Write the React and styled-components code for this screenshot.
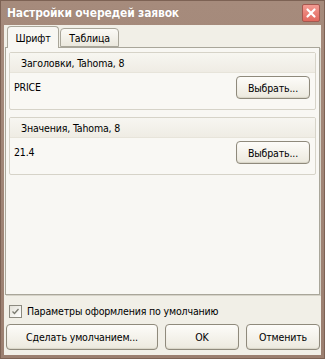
import React from "react";
import styled, { createGlobalStyle } from "styled-components";

const FONT = `"DejaVu Sans Condensed", "DejaVu Sans", Tahoma, sans-serif`;

const Global = createGlobalStyle`
  html, body { margin: 0; padding: 0; background: #fff; }
  body { font-family: ${FONT}; }
`;

const Window = styled.div`
  width: 325px;
  height: 359px;
  box-sizing: border-box;
  background: linear-gradient(#a68b7c, #9b7f70);
  border: 1px solid #7d6254;
  display: flex;
  flex-direction: column;
  padding: 0 3px 3px;
`;

const TitleBar = styled.div`
  height: 24px;
  flex: none;
  display: flex;
  align-items: center;
  justify-content: space-between;
  padding: 0 1px 0 3px;
`;

const Title = styled.div`
  color: #fff;
  font-weight: bold;
  font-size: 12px;
  letter-spacing: -0.2px;
  text-shadow: 0 0 1px rgba(0,0,0,0.2);
`;

const CloseButton = styled.div`
  width: 18px;
  height: 18px;
  box-sizing: border-box;
  border: 1px solid #a5584f;
  border-radius: 2px;
  background: linear-gradient(#f29b92, #e2685e);
  display: flex;
  align-items: center;
  justify-content: center;
`;

const Body = styled.div`
  flex: 1;
  background: #f1efe7;
  display: flex;
  flex-direction: column;
  padding: 1px 1px 5px 1px;
  font-size: 10.5px;
  letter-spacing: -0.15px;
  color: #000;
`;

const Tabs = styled.div`
  display: flex;
  align-items: flex-end;
  padding-left: 2px;
  height: 21px;
  position: relative;
  z-index: 1;
`;

const Tab = styled.div`
  box-sizing: border-box;
  height: ${p => (p.$active ? "22px" : "19px")};
  width: ${p => p.$w}px;
  justify-content: center;
  margin-bottom: ${p => (p.$active ? "-1px" : "0")};
  border: 1px solid #a9a69a;
  border-bottom: ${p => (p.$active ? "none" : "1px solid #a9a69a")};
  border-radius: 4px 4px 0 0;
  background: ${p => (p.$active ? "#f8f7f3" : "linear-gradient(#fbfaf6, #ebe8dd)")};
  display: flex;
  align-items: center;
  margin-right: 1px;
`;

const Panel = styled.div`
  flex: 1;
  background: #f8f7f3;
  border: 1px solid #a9a69a;
  box-shadow: 1px 1px 0 #d6d3c8;
  padding: 4px 3px;
  display: flex;
  flex-direction: column;
  gap: 7px;
`;

const Group = styled.div`
  border: 1px solid #d6d3c8;
  border-radius: 2px;
  background: #f9f8f4;
`;

const GroupHeader = styled.div`
  height: 19px;
  display: flex;
  align-items: center;
  padding-left: 11px;
  background: linear-gradient(#f7f6f1, #efece4);
  border-bottom: 1px solid #e7e4da;
`;

const GroupRow = styled.div`
  height: 36px;
  box-sizing: border-box;
  display: flex;
  align-items: flex-start;
  justify-content: space-between;
  padding: 3px 5px 0 4px;
`;

const Value = styled.span`
  line-height: 23px;
`;

const Button = styled.button`
  box-sizing: border-box;
  height: ${p => p.$h || 24}px;
  width: ${p => p.$w}px;
  border: 1px solid #8f8a7c;
  border-radius: 4px;
  background: linear-gradient(#fdfcf9, #ece9de);
  box-shadow: inset 0 -1px 1px #d9d5c7;
  font-family: ${FONT};
  font-size: 10.5px;
  letter-spacing: -0.15px;
  color: #000;
  padding: 0;
  display: flex;
  align-items: center;
  justify-content: center;
`;

const CheckRow = styled.label`
  display: flex;
  align-items: center;
  gap: 5px;
  padding: 9px 0 0 4px;
  height: 14px;
`;

const Checkbox = styled.span`
  width: 13px;
  height: 13px;
  box-sizing: border-box;
  border: 1px solid #8c8a80;
  background: linear-gradient(135deg, #e3e1d8, #fff);
  display: flex;
  align-items: center;
  justify-content: center;
`;

const ButtonRow = styled.div`
  display: flex;
  align-items: center;
  gap: 7px;
  margin-top: 6px;
  padding: 0 0 0 1px;
`;

export default function App() {
  return (
    <>
      <Global />
      <Window>
        <TitleBar>
          <Title>Настройки очередей заявок</Title>
          <CloseButton>
            <svg width="12" height="12" viewBox="0 0 12 12">
              <path d="M2.5 2.5 L9.5 9.5 M9.5 2.5 L2.5 9.5" stroke="#fff" strokeWidth="2.2" strokeLinecap="round" />
            </svg>
          </CloseButton>
        </TitleBar>
        <Body>
          <Tabs>
            <Tab $active $w={52}>Шрифт</Tab>
            <Tab $w={59}>Таблица</Tab>
          </Tabs>
          <Panel>
            <Group>
              <GroupHeader>Заголовки, Tahoma, 8</GroupHeader>
              <GroupRow>
                <Value>PRICE</Value>
                <Button $w={74} $h={23}>Выбрать...</Button>
              </GroupRow>
            </Group>
            <Group>
              <GroupHeader>Значения, Tahoma, 8</GroupHeader>
              <GroupRow>
                <Value>21.4</Value>
                <Button $w={74} $h={23}>Выбрать...</Button>
              </GroupRow>
            </Group>
          </Panel>
          <CheckRow>
            <Checkbox>
              <svg width="9" height="9" viewBox="0 0 9 9">
                <path d="M1.5 4.5 L3.5 6.5 L7.5 2" stroke="#7a7a70" strokeWidth="1.3" fill="none" />
              </svg>
            </Checkbox>
            <span>Параметры оформления по умолчанию</span>
          </CheckRow>
          <ButtonRow>
            <Button $w={152} $h={26}>Сделать умолчанием...</Button>
            <Button $w={74} $h={26}>OK</Button>
            <Button $w={74} $h={26}>Отменить</Button>
          </ButtonRow>
        </Body>
      </Window>
    </>
  );
}
